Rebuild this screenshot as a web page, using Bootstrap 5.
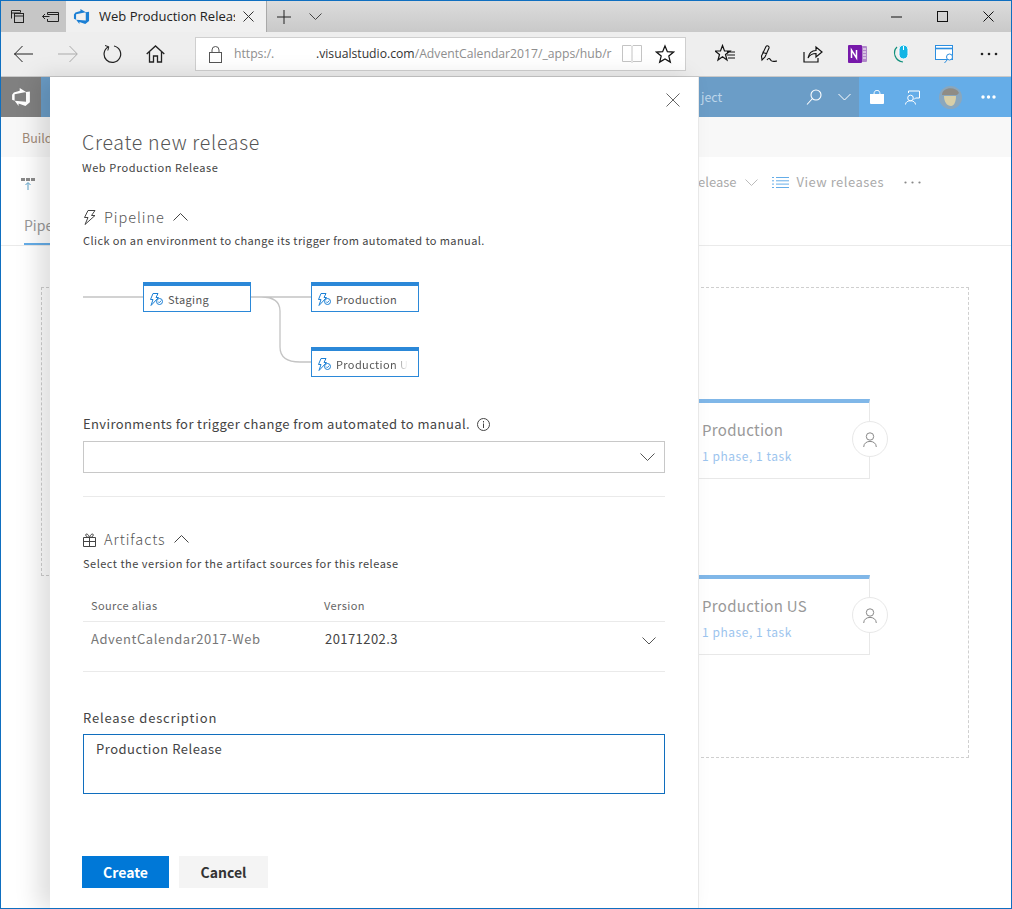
<!DOCTYPE html>
<html lang="en">
<head>
  <meta charset="UTF-8">
  <title>Create new release</title>
  <link href="https://cdn.jsdelivr.net/npm/bootstrap@5.3.0/dist/css/bootstrap.min.css" rel="stylesheet">
  <style>
    html, body { height: 909px; overflow: hidden; }
    body { font-family: "Noto Sans CJK JP", "Noto Sans", sans-serif; color: #333; background: #fff; }
    svg { display: block; flex: none; }
    .win { position: relative; height: 909px; border: 1px solid #0f6fc0; overflow: hidden; }
    .tabbar { height: 31px; background: linear-gradient(#dcdcdc, #c9c9c9); }
    .tabtools { width: 65px; height: 31px; background: #c6c6c6; gap: 17px; padding-left: 9px; }
    .edge-tab { width: 200px; height: 31px; background: #f0f0f0; padding: 0 10px 0 7px; font-family: "Open Sans", sans-serif; font-size: 13px; color: #222; }
    .edge-tab span { width: 136px; margin-left: 9px; white-space: nowrap; overflow: hidden; }
    .newtab-tools { gap: 18px; padding-left: 10px; border-left: 1px solid #a9a9a9; }
    .win-btns { gap: 35px; padding-right: 17px; }
    .toolbar-edge { height: 45px; background: #eeeeee; border-bottom: 1px solid #c9c9c9; }
    .addr { position: absolute; left: 194px; top: 36px; width: 491px; height: 34px; background: #fff; border: 1px solid #cfcfcf; font-family: "Open Sans", sans-serif; font-size: 12.2px; color: #8e8e8e; white-space: nowrap; }
    .addr b { font-weight: 400; color: #333; }
    .addr-lock { margin-left: 13px; }
    .addr-scheme { margin-left: 12px; width: 38px; }
    .addr-url { margin-left: 44px; width: 296px; overflow: hidden; }
    .addr-book { margin-left: 10px; }
    .addr-star { margin-left: 13px; }
    .app-head { height: 40px; background: #65ade8; }
    .logo-box { width: 40px; height: 40px; background: #808080; }
    .head-search { width: 818px; height: 40px; background: #6b9dc7; color: #bdd6ea; font-size: 12.5px; }
    .subnav { height: 40px; background: #f8f8f8; color: #a08a78; font-size: 12.5px; padding: 2px 0 0 21px; }
    .cmdbar { height: 89px; border-bottom: 1px solid #eaeaea; font-size: 13px; color: #aaa; }
    .cmd-tab { position: absolute; left: 23px; top: 215px; font-size: 14px; line-height: 18px; color: #999; width: 60px; height: 29px; border-bottom: 2px solid #65ade8; }
    .dash-box { position: absolute; border: 1px dashed #cfcfcf; }
    .env-card { position: absolute; left: 660px; width: 209px; height: 80px; border: 1px solid #e8e8e8; border-top: 4px solid #80b7e8; padding: 17px 0 0 40px; }
    .env-name { font-size: 15px; color: #999; letter-spacing: .3px; line-height: 20px; }
    .env-sub { font-size: 12px; color: #9cc4ee; margin-top: 8px; letter-spacing: .55px; line-height: 16px; }
    .appr { position: absolute; left: 851px; width: 36px; height: 36px; border-radius: 50%; border: 1px solid #e8e8e8; background: #fff; }
    .panel { position: absolute; left: 49px; top: 76px; width: 649px; height: 832px; background: #fff; border-right: 1px solid #e8e8e8; box-shadow: -12px 0 22px rgba(0,0,0,.13); padding: 0 33px 0 32px; }
    .panel-close { position: absolute; left: 616px; top: 16px; }
    .panel-title { font-size: 19.5px; color: #555; font-weight: 300; letter-spacing: .71px; line-height: 28px; margin: 51px 0 0; }
    .panel-sub { font-size: 11px; color: #444; letter-spacing: .55px; line-height: 16px; margin-top: 3px; }
    .sec-head { font-size: 14.5px; color: #555; font-weight: 300; letter-spacing: .95px; line-height: 20px; gap: 8px; padding-left: 1px; }
    .sec-note { font-size: 11px; color: #444; letter-spacing: .41px; line-height: 16px; padding-left: 1px; margin-top: 5px; }
    .sec-note-wide { letter-spacing: .5px; margin-top: 6px; }
    .diagram { position: relative; height: 95px; margin-top: 34px; }
    .dnode { position: absolute; width: 108px; height: 30px; background: #fff; border: 1px solid #2b88d8; border-top: 4px solid #2b88d8; font-size: 11px; color: #555; letter-spacing: .38px; padding: 1px 0 0 6px; gap: 5px; white-space: nowrap; overflow: hidden; }
    .fade-end { width: 72px; overflow: hidden; -webkit-mask-image: linear-gradient(90deg, #000 80%, transparent); mask-image: linear-gradient(90deg, #000 80%, transparent); }
    .fld-label { font-size: 13px; color: #444; letter-spacing: .39px; line-height: 18px; padding-left: 1px; gap: 7px; }
    .fld-label-wide { letter-spacing: .84px; }
    .pick-box { height: 32px; border: 1px solid #c8c8c8; margin: 8px 0 0 1px; padding-right: 9px; }
    .sep { height: 1px; background: #eaeaea; margin-left: 1px; }
    .art-head { font-size: 11px; color: #666; letter-spacing: .4px; height: 32px; margin-left: 1px; border-bottom: 1px solid #eaeaea; padding-left: 8px; }
    .art-row { font-size: 13px; height: 49px; margin-left: 1px; padding: 0 8px 15px 8px; }
    .col-alias { width: 233px; }
    .alias-text { color: #777; letter-spacing: .55px; }
    .ver-text { margin-left: 1px; color: #444; letter-spacing: .44px; }
    .row-chev { margin-right: 1px; margin-top: 4px; }
    textarea.form-control.desc-box { height: 60px; margin: 7px 0 0 1px; width: 582px; border: 1px solid #106ebe; border-radius: 0; padding: 5px 12px; font-size: 13px; letter-spacing: .5px; color: #444; resize: none; box-shadow: none; line-height: 18px; }
    .btn.act-main, .btn.act-sub { height: 32px; border: 0; border-radius: 0; font-size: 14px; font-weight: 700; padding: 0; }
    .btn.act-main { width: 87px; background: #0078d7; color: #fff; }
    .btn.act-sub { width: 89px; background: #f4f4f4; color: #333; margin-left: 2px; }
  </style>
</head>
<body class="m-0">
<div class="win">

  <!-- edge chrome -->
  <div class="tabbar d-flex">
    <div class="tabtools d-flex align-items-center">
      <svg width="15" height="15" viewBox="0 0 15 15" fill="none" stroke="#222"><path d="M1.500 9.500v-8h9v2M1.500 4h9"/><rect x="4.500" y="4.500" width="9" height="9" fill="#c6c6c6"/><path d="M4.500 7h9"/></svg>
      <svg width="17" height="12" viewBox="0 0 17 12" fill="none" stroke="#222"><path d="M5.500 8v2.500h11v-9h-11V3.500M5.500 3.500h11M.5 5.500h7M3 3 .5 5.500 3 8"/></svg>
    </div>
    <div class="edge-tab d-flex align-items-center">
      <svg width="17" height="17" viewBox="0 0 18 18"><path d="M17 4v9.740l-4 3.280-6.200-2.260V17l-3.510-4.590 10.230.8V4.440zm-3.410.49L7.850 1v2.290L2.580 4.840 1 6.870v4.610l2.260 1V6.570z" fill="#1b7fd4"/></svg>
      <span>Web Production Release</span>
      <svg class="ms-2" width="11" height="11" viewBox="0 0 11 11" stroke="#333" fill="none"><path d="M.5.500l10 10M10.500.500l-10 10"/></svg>
    </div>
    <div class="newtab-tools d-flex align-items-center">
      <svg width="14" height="14" viewBox="0 0 14 14" stroke="#222" fill="none"><path d="M7 0v14M0 7h14"/></svg>
      <svg width="13" height="7" viewBox="0 0 13 7" stroke="#444" fill="none"><path d="M.5.500l6 6 6-6"/></svg>
    </div>
    <div class="win-btns ms-auto d-flex align-items-center">
      <svg width="11" height="2" viewBox="0 0 11 2"><path d="M0 1h11" stroke="#111"/></svg>
      <svg width="11" height="11" viewBox="0 0 11 11" fill="none" stroke="#111"><rect x=".5" y=".5" width="10" height="10"/></svg>
      <svg width="11" height="11" viewBox="0 0 11 11" fill="none" stroke="#111"><path d="M.5.500l10 10M10.500.500l-10 10"/></svg>
    </div>
  </div>

  <div class="toolbar-edge d-flex align-items-center">
    <div class="d-flex align-items-center" style="gap:24px;padding-left:13px">
      <svg width="20" height="18" viewBox="0 0 20 18" fill="none" stroke="#222"><path d="M0 9h19M8.500 1 .7 9l7.800 8"/></svg>
      <svg width="20" height="18" viewBox="0 0 20 18" fill="none" stroke="#aaa"><path d="M0 9h19M11.500 1l7.800 8-7.800 8"/></svg>
      <svg width="20" height="20" viewBox="0 0 20 20" fill="none" stroke="#222" stroke-width="1.200"><path d="M6.500 2.800A8.300 8.300 0 1 0 12 2"/><path d="M3 1.500 6.800 2.800 5.800 6.500" stroke-width="1"/></svg>
      <svg width="19" height="18" viewBox="0 0 19 18" fill="none" stroke="#222" stroke-width="1.300"><path d="M.7 9 9.500 1l8.800 8M3.500 6.800V17H7.500v-6h4v6h4V6.800"/></svg>
    </div>
    <div class="ms-auto d-flex align-items-center" style="gap:24px;padding-right:12px">
      <svg width="20" height="20" viewBox="0 0 20 20" fill="none" stroke="#111" stroke-width="1.200"><path d="M7.500 1.500 9.500 7H15l-4.500 3.500 1.500 5.500-4.500-3.200L3 16l1.500-5.500L0 7h5.500zM12 8h8M12 11h8M13 14h7"/></svg>
      <svg width="20" height="20" viewBox="0 0 20 20" fill="none" stroke="#111" stroke-width="1.100"><path d="M3 16 2.500 12 7 2.500c1-1.500 3.500-.3 3 1.500L6 13zM3.500 8l4.500 2M8 16c2-3 3-1 4 .5s3 1 6 .5"/></svg>
      <svg width="20" height="20" viewBox="0 0 20 20" fill="none" stroke="#111" stroke-width="1.200"><path d="M1 8v10h14v-4M5 14c1-5 4-7.500 8-7.500V3l6 5-6 5V9.500c-3 0-6 1-8 4.500z"/></svg>
      <svg width="20" height="20" viewBox="0 0 20 20"><rect x="8" y="2" width="12" height="16" rx="1" fill="#b088c9"/><rect x="1" y="1" width="14" height="18" rx="1" fill="#7719aa"/><path d="M4.500 14V6l5 8V6" stroke="#fff" stroke-width="1.500" fill="none"/><path d="M16 5h3M16 8h3M16 11h3M16 14h3" stroke="#fff"/></svg>
      <svg width="20" height="20" viewBox="0 0 20 20" fill="none"><rect x="8" y="1" width="9" height="14" rx="4.500" fill="#12b5e5" stroke="#fff"/><path d="M12.500 2v4" stroke="#fff"/><path d="M6 3C1 8 4 17 12 18" stroke="#10907c" stroke-width="1.200"/></svg>
      <svg width="20" height="20" viewBox="0 0 20 20" fill="none" stroke="#2b8ee0"><rect x=".5" y="1.500" width="17" height="14" fill="#fff"/><path d="M.5 4.500h17" stroke-width="1.600"/><circle cx="14.500" cy="13" r="3" fill="#fff"/><path d="M12.500 15.500l-3 3.500"/></svg>
      <svg width="20" height="4" viewBox="0 0 20 4" fill="#222"><circle cx="3" cy="2" r="1.300"/><circle cx="10" cy="2" r="1.300"/><circle cx="17" cy="2" r="1.300"/></svg>
    </div>
  </div>

  <div class="addr d-flex align-items-center">
    <svg class="addr-lock" width="13" height="17" viewBox="0 0 13 17" fill="none" stroke="#555"><rect x=".5" y="6.500" width="12" height="10"/><path d="M3 6.500V4a3.500 3.500 0 0 1 7 0v2.500"/></svg>
    <span class="addr-scheme">https:/.</span>
    <span class="addr-url"><b>.visualstudio.com</b>/AdventCalendar2017/_apps/hub/r</span>
    <svg class="addr-book" width="20" height="18" viewBox="0 0 20 18" fill="none" stroke="#c4c4c4"><path d="M.5.500h8.500l1 1 1-1h8.500v16h-8.500l-1 1-1-1H.5zM10 1.500v15"/></svg>
    <svg class="addr-star" width="20" height="20" viewBox="0 0 21 20" fill="none" stroke="#111" stroke-width="1.300"><path d="M10.500 1.500 13 7.500l6.500.5-5 4.200 1.600 6.300-5.600-3.400-5.600 3.400 1.600-6.300-5-4.200 6.500-.5z"/></svg>
  </div>

  <!-- page behind the panel -->
  <div class="app-head d-flex">
    <div class="logo-box d-flex align-items-center justify-content-center">
      <svg width="20" height="20" viewBox="0 0 18 18"><path d="M17 4v9.740l-4 3.280-6.200-2.260V17l-3.510-4.590 10.230.8V4.440zm-3.410.49L7.850 1v2.290L2.580 4.840 1 6.870v4.610l2.260 1V6.570z" fill="#fff"/></svg>
    </div>
    <div class="head-search d-flex align-items-center justify-content-end">
      <span class="me-auto" style="margin-left:660px">ject</span>
      <svg width="16" height="17" viewBox="0 0 16 17" fill="none" stroke="#fff" stroke-width="1.100"><circle cx="10" cy="6" r="5"/><path d="M6.500 9.500 1 15.500"/></svg>
      <svg class="ms-3 me-2" width="13" height="8" viewBox="0 0 13 8" fill="none" stroke="#fff"><path d="M.5 1l6 6 6-6"/></svg>
    </div>
    <div class="flex-grow-1 d-flex align-items-center" style="padding-left:11px">
      <svg width="14" height="14" viewBox="0 0 14 14" fill="#fff"><path d="M0 4h14v9a1 1 0 0 1-1 1H1a1 1 0 0 1-1-1z"/><path d="M4 4c0-5 6-5 6 0" fill="none" stroke="#fff"/></svg>
      <svg style="margin-left:21px" width="15" height="15" viewBox="0 0 15 15" fill="none" stroke="#fff"><path d="M3.500 3V1h11v7h-4l-1.500 1.500"/><circle cx="5.500" cy="8" r="2.800"/><path d="M.5 14.500c0-5 10-5 10 0"/></svg>
      <svg style="margin-left:19px" width="23" height="23" viewBox="0 0 23 23"><circle cx="11.500" cy="11.500" r="11.500" fill="#8aa7bd"/><path d="M3 9c0-8 14-9 17-2l-2 2H5z" fill="#8f8c85"/><path d="M5 10h12c0 6-2 10-5 10-4 0-7-4-7-10z" fill="#d8cfa8"/></svg>
      <svg style="margin-left:19px" width="15" height="4" viewBox="0 0 15 4" fill="#fff"><circle cx="2" cy="2" r="1.700"/><circle cx="7.500" cy="2" r="1.700"/><circle cx="13" cy="2" r="1.700"/></svg>
    </div>
  </div>
  <div class="subnav d-flex align-items-center">Build</div>
  <div class="cmdbar position-relative">
    <svg class="position-absolute" style="left:20px;top:20px" width="15" height="14" viewBox="0 0 15 14"><path d="M0 1h4v3H0zM5 1h4v3H5zM10 1h4v3h-4z" fill="#8a8a8a"/><path d="M7 13V6M4.500 8 7 5.500 9.500 8" fill="none" stroke="#5aa0c8"/></svg>
    <div class="position-absolute d-flex align-items-center" style="left:697px;top:16px;height:18px">
      <span>elease</span>
      <svg class="ms-2" width="13" height="7" viewBox="0 0 13 7" fill="none" stroke="#bbb"><path d="M.5.500l6 6 6-6"/></svg>
      <svg style="margin-left:14px" width="17" height="11" viewBox="0 0 17 11" stroke="#65ade8"><path d="M4 .5h13M4 3.800h13M4 7.100h13M4 10.500h13M0 .5h2M0 3.800h2M0 7.100h2M0 10.500h2"/></svg>
      <span style="margin-left:8px;letter-spacing:.5px">View releases</span>
      <svg style="margin-left:20px" width="17" height="3" viewBox="0 0 17 3" fill="#888"><circle cx="1.500" cy="1.500" r="1.100"/><circle cx="8.500" cy="1.500" r="1.100"/><circle cx="15.500" cy="1.500" r="1.100"/></svg>
    </div>
  </div>
  <div class="cmd-tab">Pipeline</div>

  <div class="dash-box" style="left:40px;top:286px;width:300px;height:289px"></div>
  <div class="dash-box" style="left:640px;top:286px;width:328px;height:471px"></div>
  <div class="env-card" style="top:398px"><div class="env-name">Production</div><div class="env-sub">1 phase, 1 task</div></div>
  <div class="appr d-flex align-items-center justify-content-center" style="top:420px"><svg width="14" height="15" viewBox="0 0 14 15" fill="none" stroke="#888"><circle cx="7" cy="4.500" r="3.700"/><path d="M.7 15c0-7.500 12.600-7.500 12.600 0"/></svg></div>
  <div class="env-card" style="top:574px"><div class="env-name">Production US</div><div class="env-sub">1 phase, 1 task</div></div>
  <div class="appr d-flex align-items-center justify-content-center" style="top:596px"><svg width="14" height="15" viewBox="0 0 14 15" fill="none" stroke="#888"><circle cx="7" cy="4.500" r="3.700"/><path d="M.7 15c0-7.500 12.600-7.500 12.600 0"/></svg></div>

  <!-- side panel -->
  <div class="panel">
    <svg class="panel-close" width="14" height="14" viewBox="0 0 14 14" fill="none" stroke="#666"><path d="M.5.500l13 13M13.500.500l-13 13"/></svg>
    <h1 class="panel-title">Create new release</h1>
    <div class="panel-sub">Web Production Release</div>

    <div class="sec-head d-flex align-items-center" style="margin-top:32px">
      <svg width="13" height="15" viewBox="0 0 13 15" fill="none" stroke="#444"><path d="M5 .5h7L8.500 5.500H12L2 14.500l3-7H1.500z"/></svg>
      <span>Pipeline</span>
      <svg width="15" height="8" viewBox="0 0 15 8" fill="none" stroke="#444"><path d="M.5 7.500l7-7 7 7"/></svg>
    </div>
    <div class="sec-note">Click on an environment to change its trigger from automated to manual.</div>

    <div class="diagram">
      <svg class="position-absolute top-0 start-0" width="340" height="95" viewBox="0 0 340 95" fill="none" stroke="#c4c4c4" stroke-width="1.300"><path d="M1 15h60M169 15h60M169 15h10c12 0 19 4 19 14v36c0 11 8 15 20 15h11"/></svg>
      <div class="dnode d-flex align-items-center" style="left:61px;top:0"><svg width="13" height="13" viewBox="0 0 13 13" fill="none" stroke="#1b7fd4"><path d="M3 .5h5L6 4.500h2.500L1 12.500l2-6H.5z"/><circle cx="9.500" cy="8.500" r="3"/><path d="M8 8.500l1.200 1.200 2-2"/></svg><span>Staging</span></div>
      <div class="dnode d-flex align-items-center" style="left:229px;top:0"><svg width="13" height="13" viewBox="0 0 13 13" fill="none" stroke="#1b7fd4"><path d="M3 .5h5L6 4.500h2.500L1 12.500l2-6H.5z"/><circle cx="9.500" cy="8.500" r="3"/><path d="M8 8.500l1.200 1.200 2-2"/></svg><span>Production</span></div>
      <div class="dnode d-flex align-items-center" style="left:229px;top:65px"><svg width="13" height="13" viewBox="0 0 13 13" fill="none" stroke="#1b7fd4"><path d="M3 .5h5L6 4.500h2.500L1 12.500l2-6H.5z"/><circle cx="9.500" cy="8.500" r="3"/><path d="M8 8.500l1.200 1.200 2-2"/></svg><span class="fade-end">Production US</span></div>
    </div>

    <div class="fld-label d-flex align-items-center" style="margin-top:38px">
      <span>Environments for trigger change from automated to manual.</span>
      <svg width="13" height="13" viewBox="0 0 13 13" fill="none" stroke="#444"><circle cx="6.500" cy="6.500" r="6"/><path d="M6.500 5.500v4.500M6.500 3v1.500"/></svg>
    </div>
    <div class="pick-box d-flex align-items-center justify-content-end">
      <svg width="15" height="8" viewBox="0 0 15 8" fill="none" stroke="#555"><path d="M.5.500l7 7 7-7"/></svg>
    </div>
    <div class="sep" style="margin-top:23px"></div>

    <div class="sec-head d-flex align-items-center" style="margin-top:32px">
      <svg width="13" height="15" viewBox="0 0 13 15" fill="none" stroke="#444"><path d="M.5 5.500h12v9H.5zM.5 9.500h12M6.500 5.500v9M6.500 5.500C5 1 2 1 3 4c.3.800 2 1.500 3.500 1.500zM6.500 5.500C8 1 11 1 10 4c-.3.800-2 1.500-3.500 1.500z"/></svg>
      <span>Artifacts</span>
      <svg width="15" height="8" viewBox="0 0 15 8" fill="none" stroke="#444"><path d="M.5 7.500l7-7 7 7"/></svg>
    </div>
    <div class="sec-note sec-note-wide">Select the version for the artifact sources for this release</div>

    <div class="art-head d-flex align-items-center" style="margin-top:19px">
      <div class="col-alias">Source alias</div>
      <div>Version</div>
    </div>
    <div class="art-row d-flex align-items-center">
      <div class="col-alias alias-text">AdventCalendar2017-Web</div>
      <div class="ver-text">20171202.3</div>
      <svg class="row-chev ms-auto" width="14" height="8" viewBox="0 0 14 8" fill="none" stroke="#555"><path d="M.5.500l6.500 6.500 6.500-6.500"/></svg>
    </div>
    <div class="sep"></div>

    <div class="fld-label fld-label-wide" style="margin-top:37px">Release description</div>
    <textarea class="form-control desc-box">Production Release</textarea>

    <div class="d-flex gap-2" style="margin-top:62px">
      <button type="button" class="btn act-main">Create</button>
      <button type="button" class="btn act-sub">Cancel</button>
    </div>
  </div>
</div>
</body>
</html>
